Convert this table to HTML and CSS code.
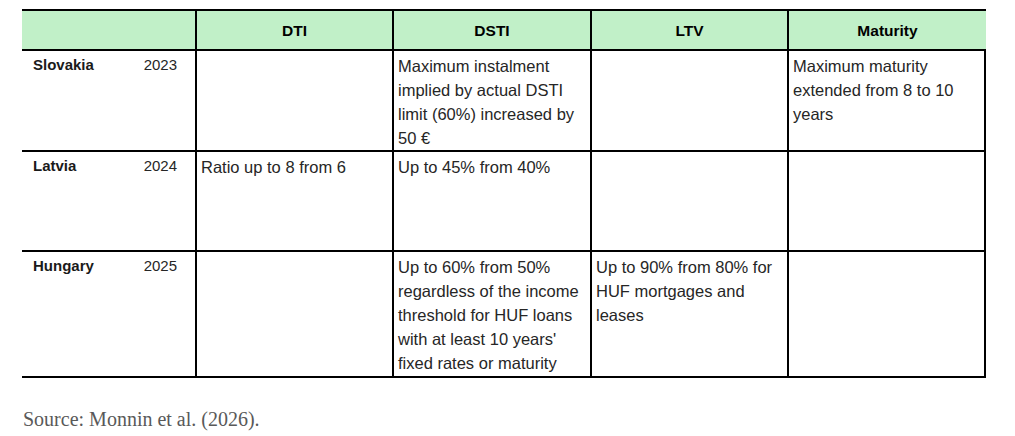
FILE: index.html
```html
<!DOCTYPE html>
<html lang="en">
<head>
<meta charset="utf-8">
<title>Borrower-based measures</title>
<link rel="stylesheet" href="styles.css">
</head>
<body>
<div class="page">
  <div class="grid">
    <div class="hd hd-first"></div>
    <div class="hd">DTI</div>
    <div class="hd">DSTI</div>
    <div class="hd">LTV</div>
    <div class="hd hd-last">Maturity</div>

    <div class="country r1">Slovakia</div>
    <div class="year r1">2023</div>
    <div class="cell r1"></div>
    <div class="cell r1">Maximum instalment<br>implied by actual DSTI<br>limit (60%) increased by<br>50 €</div>
    <div class="cell r1"></div>
    <div class="cell r1 last">Maximum maturity<br>extended from 8 to 10<br>years</div>

    <div class="country r2">Latvia</div>
    <div class="year r2">2024</div>
    <div class="cell r2">Ratio up to 8 from 6</div>
    <div class="cell r2">Up to 45% from 40%</div>
    <div class="cell r2"></div>
    <div class="cell r2 last"></div>

    <div class="country r3">Hungary</div>
    <div class="year r3">2025</div>
    <div class="cell r3"></div>
    <div class="cell r3">Up to 60% from 50%<br>regardless of the income<br>threshold for HUF loans<br>with at least 10 years'<br>fixed rates or maturity</div>
    <div class="cell r3">Up to 90% from 80% for<br>HUF mortgages and<br>leases</div>
    <div class="cell r3 last"></div>
  </div>
  <p class="source">Source: Monnin et al. (2026).</p>
</div>
</body>
</html>
```

FILE: styles.css
```css
html, body {
  margin: 0;
  padding: 0;
  background: #ffffff;
}

.page {
  padding: 9px 0 0 22px;
}

.grid {
  display: grid;
  width: 964px;
  grid-template-columns: 111px 64px 197px 198px 197px 197px;
  grid-template-rows: 40px 101px 100px 126px;
  border-top: 2px solid #000;
  border-right: 2px solid #000;
  box-sizing: border-box;
  font-family: "Liberation Sans", Arial, sans-serif;
}

.grid > div {
  box-sizing: border-box;
  border-bottom: 2px solid #000;
}

.hd {
  background: #c1f0c8;
  border-right: 2px solid #000;
  display: flex;
  align-items: center;
  justify-content: center;
  font-weight: bold;
  font-size: 15.5px;
  color: #000;
  padding-top: 1px;
}

.hd-first {
  grid-column: span 2;
}

.hd-last {
  border-right: none;
}

.country {
  font-weight: bold;
  font-size: 15px;
  line-height: 24px;
  color: #1a1a1a;
  padding: 2px 0 0 11px;
}

.year {
  font-size: 15px;
  line-height: 24px;
  color: #262626;
  text-align: right;
  padding: 2px 18px 0 0;
  border-right: 2px solid #000;
}

.cell {
  font-size: 16.5px;
  line-height: 24px;
  color: #262626;
  padding: 3px 3px 0 4px;
  border-right: 2px solid #000;
  white-space: nowrap;
}

.cell.last {
  border-right: none;
}

.source {
  margin: 30px 0 0 1px;
  font-family: "Liberation Serif", "Times New Roman", serif;
  font-size: 20px;
  color: #595959;
}
```
